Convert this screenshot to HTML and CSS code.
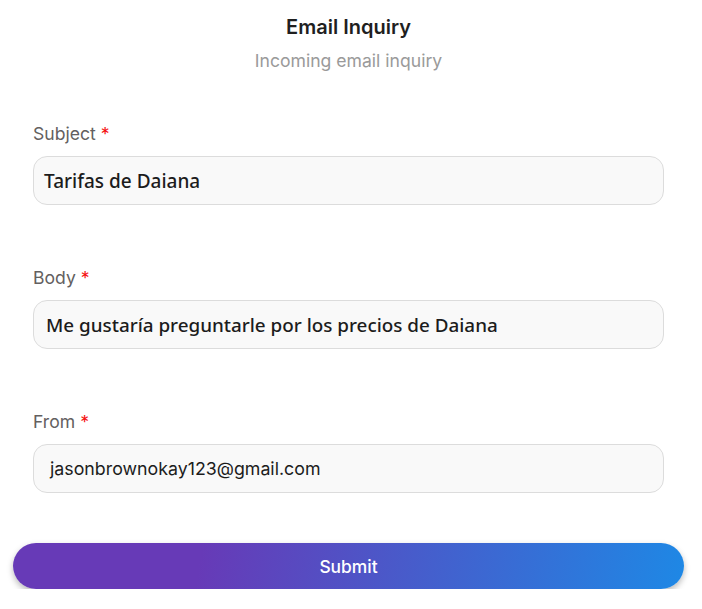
FILE: index.html
```html
<!DOCTYPE html>
<html>
<head>
<meta charset="utf-8">
<link rel="stylesheet" href="styles.css">
</head>
<body>
<div class="page">
  <header class="head">
    <h1 class="title">Email Inquiry</h1>
    <p class="subtitle">Incoming email inquiry</p>
  </header>
  <form class="form">
    <div class="field">
      <label class="label">Subject <span class="req">*</span></label>
      <div class="input input-subject">Tarifas de Daiana</div>
    </div>
    <div class="field">
      <label class="label">Body <span class="req">*</span></label>
      <div class="input input-body">Me gustaría preguntarle por los precios de Daiana</div>
    </div>
    <div class="field">
      <label class="label">From <span class="req">*</span></label>
      <div class="input input-from">jasonbrownokay123@gmail.com</div>
    </div>
  </form>
  <button class="submit" type="button">Submit</button>
</div>
</body>
</html>
```
FILE: styles.css
```css
* { box-sizing: border-box; }
html, body { margin: 0; padding: 0; background: #fff; }
body { font-family: Inter, "Noto Sans", sans-serif; }
.page { width: 697px; }
.head { text-align: center; padding-top: 15px; }
.title { margin: 0; font-size: 20px; line-height: 24px; font-weight: 600; color: #1f1f1f; }
.subtitle { margin: 11px 0 0; font-size: 17.6px; line-height: 22px; color: #9a9a9a; }
.form { margin-top: 51px; padding-left: 33px; display: flex; flex-direction: column; gap: 62px; }
.field { display: flex; flex-direction: column; gap: 11px; width: 631px; }
.label { font-size: 17.6px; line-height: 22px; color: #636060; }
.req { color: #f51010; }
.input { height: 49px; border: 1px solid #dcdcdc; border-radius: 14px; background: #f9f9f9; display: flex; align-items: center; color: #1c1c1c; }
.input-subject { font-family: "Noto Sans", sans-serif; font-weight: 500; font-size: 19px; padding-left: 10px; }
.input-body { font-family: "Noto Sans", sans-serif; font-weight: 500; font-size: 18.85px; padding-left: 12px; }
.input-from { font-family: Inter, sans-serif; font-size: 17.8px; padding-left: 16px; }
.submit { display: block; margin: 50px 0 0 13px; width: 671px; height: 46px; border: 0; border-radius: 23px; background: linear-gradient(100deg, #673ab7 0%, #673ab7 28%, #1e88e5 100%); color: #fff; font-family: Inter, sans-serif; font-weight: 500; font-size: 17.4px; box-shadow: 0 3px 6px rgba(0,0,0,0.28); cursor: pointer; }
```
